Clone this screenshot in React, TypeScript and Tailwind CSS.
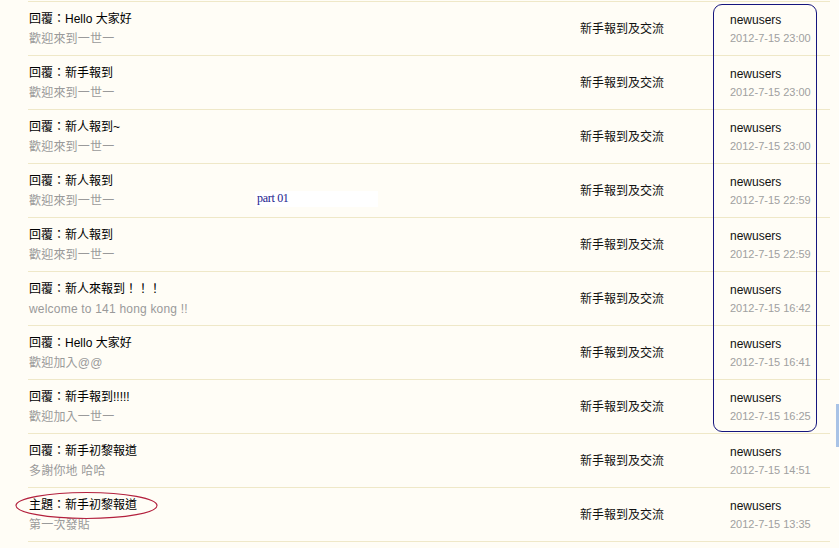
import React from 'react';

const rows = [
  { title: '回覆：Hello 大家好', sub: '歡迎來到一世一', time: '2012-7-15 23:00' },
  { title: '回覆：新手報到', sub: '歡迎來到一世一', time: '2012-7-15 23:00' },
  { title: '回覆：新人報到~', sub: '歡迎來到一世一', time: '2012-7-15 23:00' },
  { title: '回覆：新人報到', sub: '歡迎來到一世一', time: '2012-7-15 22:59' },
  { title: '回覆：新人報到', sub: '歡迎來到一世一', time: '2012-7-15 22:59' },
  { title: '回覆：新人來報到！！！', sub: 'welcome to 141 hong kong !!', time: '2012-7-15 16:42' },
  { title: '回覆：Hello 大家好', sub: '歡迎加入@@', time: '2012-7-15 16:41' },
  { title: '回覆：新手報到!!!!!', sub: '歡迎加入一世一', time: '2012-7-15 16:25' },
  { title: '回覆：新手初黎報道', sub: '多謝你地 哈哈', time: '2012-7-15 14:51' },
  { title: '主題：新手初黎報道', sub: '第一次發貼', time: '2012-7-15 13:35' },
];

export default function App() {
  return (
    <div
      className="relative w-[839px] h-[548px] overflow-hidden bg-[#fffdf6] text-[12px]"
      style={{ fontFamily: '"Liberation Sans", "Noto Sans CJK TC", sans-serif' }}
    >
      {/* Topic list */}
      <div className="ml-[28px] mt-px w-[802px] border-t border-[#efe8c8]">
        {rows.map((r, i) => (
          <div key={i} className="flex items-center h-[54px] border-b border-[#efe8c8]">
            <div className="w-[552px] pl-px flex flex-col leading-[20px]">
              <span className="text-black">{r.title}</span>
              <span className="text-[#9a9a9a] tracking-[0.2px]">{r.sub}</span>
            </div>
            <div className="w-[150px] text-[#111]">新手報到及交流</div>
            <div className="flex flex-col leading-[18px]">
              <span className="text-[#111]">newusers</span>
              <span className="text-[11px] text-[#a0a0a0]">{r.time}</span>
            </div>
          </div>
        ))}
      </div>

      {/* Annotations */}
      <div className="absolute left-[713px] top-[4px] w-[104px] h-[428px] rounded-[9px] border-[1.5px] border-[#15157e]" />
      <svg className="absolute left-0 top-0" width="839" height="548">
        <ellipse cx="86.5" cy="505.5" rx="70.5" ry="13" fill="none" stroke="#b3203d" strokeWidth="1.2" />
      </svg>
      <div
        className="absolute left-[255px] top-[191px] w-[123px] h-[16px] bg-white pl-[2px] text-[12px] leading-[14px] text-[#1a1a8e] tracking-[-0.3px]"
        style={{ fontFamily: '"Liberation Serif", serif' }}
      >
        part 01
      </div>
      <div className="absolute left-[836px] top-[404px] w-[3px] h-[43px] bg-[#a9c3e6]" />
    </div>
  );
}
